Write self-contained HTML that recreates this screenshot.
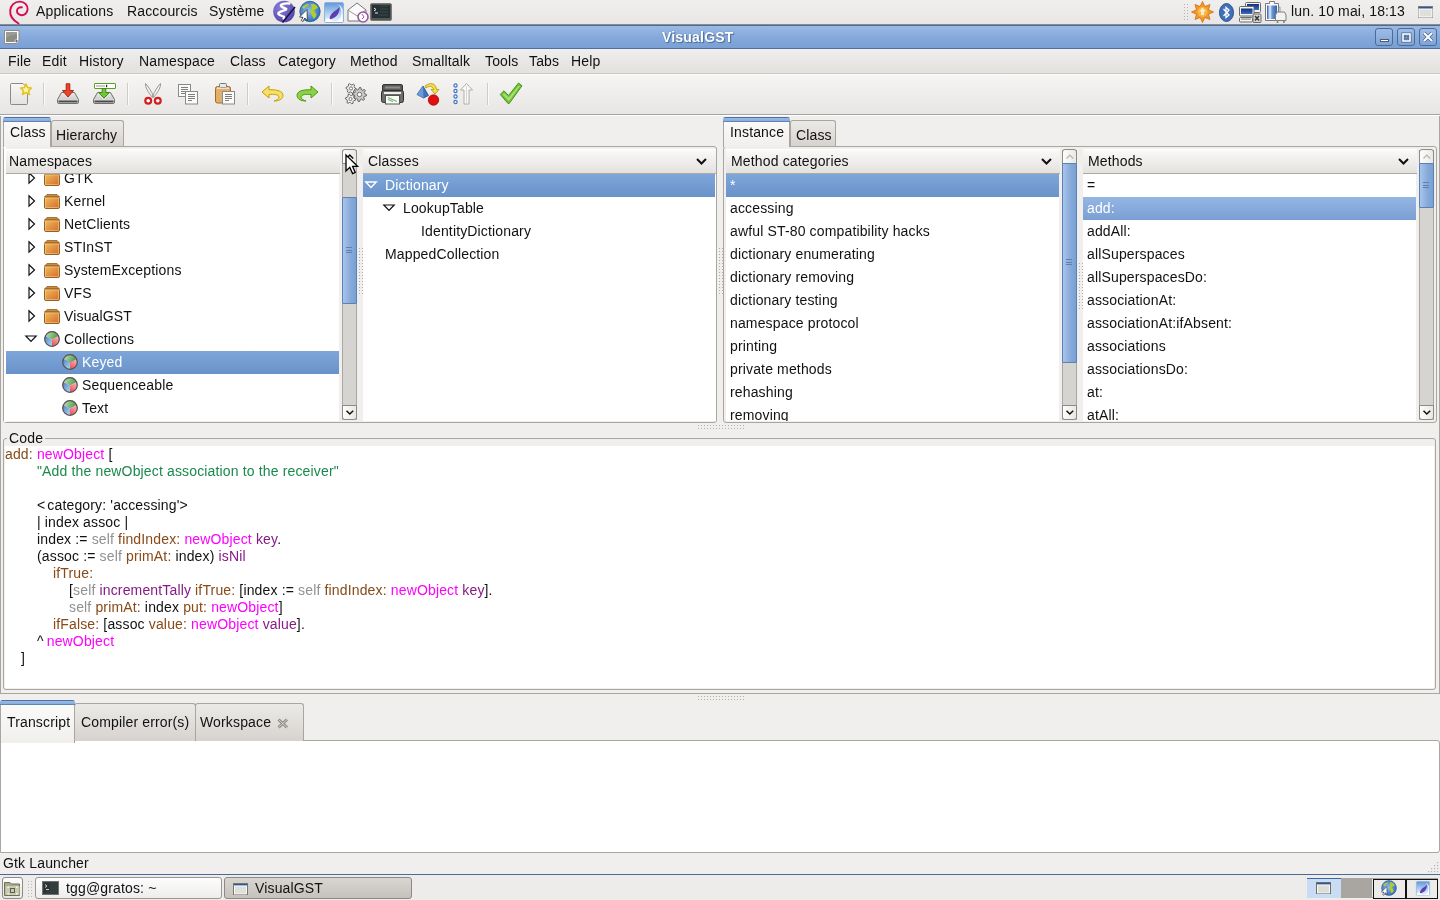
<!DOCTYPE html>
<html><head><meta charset="utf-8">
<style>
*{box-sizing:border-box;margin:0;padding:0}
body{will-change:transform}
html,body{width:1440px;height:900px;overflow:hidden;background:#f0efee;font-family:"Liberation Sans",sans-serif;font-size:14px;line-height:16px;color:#111;letter-spacing:.15px}
.a{position:absolute;white-space:nowrap}
svg{position:absolute;overflow:visible}
.mi{top:53px}
.tsep{position:absolute;top:83px;width:2px;height:22px;border-left:1px solid #cfccc8;border-right:1px solid #fbfbfa}
.hdr{position:absolute;height:25px;background:linear-gradient(#f9f9f8,#e4e2df);border-top:1px solid #fff;border-bottom:1px solid #aeaaa4;line-height:22px;padding-left:3px}
.rows{position:absolute;background:#fff;overflow:hidden}
.row{position:relative;height:23px;line-height:23px;white-space:nowrap}
.sel{background:linear-gradient(#7ea6da,#6893c9);color:#fff}
.sbt{position:absolute;width:15px;background:#d6d4d0;border-left:1px solid #aaa6a0;border-right:1px solid #aaa6a0}
.step{position:absolute;width:15px;height:15px;background:linear-gradient(90deg,#fdfdfd,#e9e8e6);border:1px solid #8e8a84}
.thumb{position:absolute;width:15px;background:linear-gradient(90deg,#a9c5ea,#85a9d9 60%,#7aa1d4);border:1px solid #5a80b5;border-radius:1px}
.tab{position:absolute;height:26px;background:linear-gradient(#eceae7,#d6d3cf);border:1px solid #a9a59f;border-bottom:none;border-radius:3px 3px 0 0;line-height:29px;padding-left:6px}
.tabact{position:absolute;background:linear-gradient(#fbfbfa,#f0efee);border:1px solid #a9a59f;border-bottom:none;border-radius:3px 3px 0 0;line-height:29px;padding-left:6px}
.tabact:before{content:"";position:absolute;left:-1px;right:-1px;top:-1px;height:5px;background:linear-gradient(#4a70a6 0,#4a70a6 1px,#9bbbe6 1px,#87abdc 4px,#5f86bb 4px);border-radius:3px 3px 0 0}
.page{position:absolute;border:1px solid #a9a59f;border-radius:3px;background:#f0efee}
.code span{white-space:pre}
.br{color:#874a18}.mg{color:#f0f}.gr{color:#1a8a4c}.gy{color:#919191}.pu{color:#871a87}
</style></head><body>

<!-- ===== top panel ===== -->
<div class="a" style="left:0;top:0;width:1440px;height:25px;background:linear-gradient(#f0efee,#e8e7e5);border-bottom:1px solid #8f8c87"></div>
<!-- debian swirl -->
<svg style="left:8px;top:0px" width="22" height="25" viewBox="0 0 22 25"><path d="M10.5 23.5 C4.5 20 1.8 15 2.2 10.5 C2.6 5.5 6.5 1.6 11.8 1.6 C16.5 1.6 19.8 5 19.6 9.3 C19.4 13 16.5 15.4 13.3 15.2 C10.5 15 8.8 12.8 9 10.6 C9.2 8.5 11 7 13.8 7.3" fill="none" stroke="#d70a53" stroke-width="1.9" stroke-linecap="round"/></svg>
<div class="a" style="left:36px;top:3px">Applications</div>
<div class="a" style="left:127px;top:3px">Raccourcis</div>
<div class="a" style="left:209px;top:3px">Système</div>
<!-- launcher icons -->
<svg style="left:273px;top:0px" width="23" height="23"><defs><radialGradient id="em" cx=".35" cy=".3" r=".8"><stop offset="0" stop-color="#8a7fd6"/><stop offset="1" stop-color="#4f41a8"/></radialGradient></defs><circle cx="11" cy="11.5" r="10.8" fill="url(#em)"/><path d="M16.5 3.5 C11 3 6 4.5 8.5 6.5 C11 8.5 15.5 8.3 12 10 C8 11.8 3.5 12.5 6 14.5 C8.5 16.5 13 16 10.5 18.5" fill="none" stroke="#fff" stroke-width="2.3" stroke-linecap="round"/><path d="M9.5 22.5 L22 7" stroke="#161640" stroke-width="1.6"/></svg>
<svg style="left:299px;top:1px" width="22" height="21"><defs><radialGradient id="gl" cx=".45" cy=".45" r=".6"><stop offset="0" stop-color="#8ec0ee"/><stop offset="1" stop-color="#2c68b5"/></radialGradient></defs><circle cx="11" cy="10.5" r="10.2" fill="url(#gl)" stroke="#24589e" stroke-width=".8"/><path d="M12 3 C15 2 18 4 19 7 C17 8 16 8 15 9.5 C15.5 11 17 12 17.5 14 C16.5 17 15 18 14 17 C13.5 14.5 12 13 11 11 C12 9 13 8 12.5 6Z" fill="#b2cc2e"/><path d="M3 6 C5 4 8 2.5 10 3 C9 5 7 5.5 5 8 C4 7.5 3.5 7 3 6Z" fill="#b2cc2e"/><path d="M7.3 8.5 L7.5 18.5 L1 15.5 L3.8 14.6 L0 11 Z" fill="none"/><path d="M8 8.5 L8.3 19.5 L5.8 17 L4 20.5 L2.3 19.6 L4 16.3 L0.5 16 Z" fill="#fff" stroke="#333" stroke-width=".8" stroke-linejoin="round"/></svg>
<svg style="left:324px;top:2px" width="20" height="21"><defs><linearGradient id="ft" x1="0" y1="0" x2="0" y2="1"><stop offset="0" stop-color="#5f98da"/><stop offset=".6" stop-color="#bcd6f1"/><stop offset="1" stop-color="#eef5fc"/></linearGradient></defs><rect x=".5" y=".5" width="19" height="20" rx="1.5" fill="url(#ft)" stroke="#8ab3e6"/><path d="M13.5 2 C18 5 18.5 12 16.5 16 C15 18.5 13 19.5 10 20 L18.5 20 L18.5 8 C17.5 5 16 3 13.5 2Z" fill="#fff"/><path d="M15.5 5 C16 11 12.5 16 5.5 17.5 C5.5 14 8 11 10 9.5 C12 8 14 7 15.5 5Z" fill="#5b3fb3"/><path d="M1 20 C1.5 16.5 3.5 15.5 5.5 16.5 C7 18.5 9 19.5 11 20Z" fill="#fff"/></svg>
<svg style="left:347px;top:1px" width="22" height="22"><path d="M1 9 L10 2 L19 9 L19 20 L1 20Z" fill="#fbfbfb" stroke="#777" stroke-width="1"/><path d="M1 9 L10 15 L19 9" fill="none" stroke="#999"/><circle cx="16" cy="16" r="5" fill="#fff" stroke="#9b54a6" stroke-width="1.6"/><path d="M15 13 L17 16 L15 18" fill="none" stroke="#555" stroke-width=".8"/></svg>
<svg style="left:370px;top:3px" width="22" height="18"><rect x=".5" y=".5" width="21" height="17" rx="1.5" fill="#555753" stroke="#7a7a78"/><rect x="2" y="2" width="18" height="13" fill="#243033"/><path d="M4 5 L6 6.5 L4 8 M5 10 L8 10" stroke="#eee" stroke-width="1" fill="none"/><path d="M10 3 L18 3 M10 6 L18 6 M10 9 L18 9 M9 12 L18 12" stroke="#3b4a4d" stroke-width="1.2"/></svg>
<!-- tray -->
<div class="a" style="left:1183px;top:3px;width:5px;height:18px;background-image:radial-gradient(circle,#b8b5b0 0.8px,transparent 1px);background-size:3px 3px"></div>
<svg style="left:1191px;top:1px" width="23" height="22"><path d="M11.5 0.5 L13.8 5.5 L19 3.5 L17.5 8.8 L22.5 11 L17.5 13.3 L19 18.5 L13.8 16.5 L11.5 21.5 L9.2 16.5 L4 18.5 L5.5 13.3 L0.5 11 L5.5 8.8 L4 3.5 L9.2 5.5Z" fill="#f09a26" stroke="#d56a0c" stroke-width=".8"/><circle cx="11.5" cy="11" r="5" fill="#f7b648"/><path d="M11.5 6.5 L15 10.5 L13 10.5 L13 14 L10 14 L10 10.5 L8 10.5Z" fill="#ffe9c4"/></svg>
<svg style="left:1219px;top:3px" width="15" height="19"><ellipse cx="7.5" cy="9.5" rx="7" ry="9" fill="#3f6fb8" stroke="#2c5495"/><path d="M4.5 6 L10 12 L7 14.5 L7 4.5 L10 7 L4.5 13" fill="none" stroke="#fff" stroke-width="1.3"/></svg>
<svg style="left:1239px;top:1px" width="23" height="22"><defs><linearGradient id="scr" x1="0" y1="0" x2="0" y2="1"><stop offset="0" stop-color="#0f2f80"/><stop offset="1" stop-color="#3d6ec0"/></linearGradient></defs><rect x="6.5" y="1.5" width="15" height="10" rx="1" fill="#f4f4f2" stroke="#6a6a68"/><rect x="8" y="3" width="12" height="6" fill="url(#scr)"/><rect x=".5" y="5.5" width="14.5" height="9.5" rx="1" fill="#f4f4f2" stroke="#6a6a68"/><rect x="2" y="7.5" width="11.5" height="5.5" fill="url(#scr)"/><rect x=".5" y="16.5" width="13" height="4.5" rx="1" fill="#f4f4f2" stroke="#6a6a68"/><rect x="2" y="17.5" width="10" height="1.2" fill="#888"/><rect x="14" y="13" width="8" height="8.5" rx="1" fill="#d8d8d6" stroke="#6a6a68"/><path d="M16 15 L20 19.5 M20 15 L16 19.5" stroke="#3a3a3a" stroke-width="1.6"/></svg>
<svg style="left:1265px;top:1px" width="22" height="23"><defs><linearGradient id="bat" x1="0" y1="0" x2="1" y2="0"><stop offset="0" stop-color="#2a5cb0"/><stop offset=".3" stop-color="#e8f0fa"/><stop offset=".5" stop-color="#6e98d4"/><stop offset="1" stop-color="#2f62b5"/></linearGradient></defs><path d="M4.5 .5 L9.5 .5 L9.5 2.5 L13.5 2.5 L13.5 19.5 L.5 19.5 L.5 2.5 L4.5 2.5Z" fill="#fafafa" stroke="#7a7a78"/><rect x="2" y="4.5" width="10" height="13.5" fill="url(#bat)"/><path d="M14 6 L15 6 L15 11" fill="none" stroke="#9a9a98"/><path d="M10.5 14 L12 11 L19.5 11 L21 14 L21 19.5 L10.5 19.5Z" fill="#f2f2f0" stroke="#7e7e7c"/><path d="M12.5 19.5 L12.5 22 M19 19.5 L19 22" stroke="#8a8a88" stroke-width="1.8"/></svg>
<div class="a" style="left:1291px;top:3px">lun. 10 mai, 18:13</div>
<svg style="left:1418px;top:6px" width="15" height="12"><rect x=".5" y=".5" width="14" height="11" fill="#dfe0da" stroke="#7c7c78"/><rect x="1" y="1" width="13" height="2" fill="#2d55a0"/><rect x="1" y="3" width="13" height="8" fill="#dfe0da" stroke="#fff" stroke-width="1"/></svg>

<!-- ===== title bar ===== -->
<div class="a" style="left:0;top:25px;width:1440px;height:24px;background:linear-gradient(#9abae4,#86a9dc 50%,#7aa0d4);border-top:1px solid #4b6d9d;border-bottom:1px solid #4d70a1"></div>
<svg style="left:4px;top:30px" width="16" height="14"><path d="M.5 .5 L15 .5 L15 10 L12 13.5 L.5 13.5Z" fill="#fff" stroke="#8f8b82"/><rect x="2" y="2" width="11" height="10" fill="#8c8c88"/><path d="M2 8 C6 5 9 5 13 4 L13 2 L2 2Z" fill="#9c9c98"/><circle cx="12.5" cy="11" r="1.5" fill="#666" stroke="#eee" stroke-width=".7"/></svg>
<div class="a" style="left:662px;top:29px;color:#fff;font-weight:bold;font-size:14px;letter-spacing:.2px;text-shadow:0 0 1px #4a6b99,1px 1px 1px #4a6b99">VisualGST</div>
<div class="a" style="left:1375px;top:28px;width:18px;height:18px;border:1px solid #4c6c98;border-radius:3px;background:linear-gradient(#9dbde6,#7ea4d6)"><div class="a" style="left:4px;top:10px;width:9px;height:3px;background:#fff;border:1px solid #557"></div></div>
<div class="a" style="left:1397px;top:28px;width:18px;height:18px;border:1px solid #4c6c98;border-radius:3px;background:linear-gradient(#9dbde6,#7ea4d6)"><svg style="left:4px;top:4px" width="9" height="9"><rect x="1" y="1" width="7" height="7" fill="none" stroke="#46628c" stroke-width="3"/><rect x="1" y="1" width="7" height="7" fill="none" stroke="#fff" stroke-width="1.6"/><rect x="3" y="3.5" width="3" height="2" fill="none" stroke="#46628c" stroke-width=".8"/></svg></div>
<div class="a" style="left:1419px;top:28px;width:18px;height:18px;border:1px solid #4c6c98;border-radius:3px;background:linear-gradient(#9dbde6,#7ea4d6)"><svg style="left:3px;top:3px" width="10" height="10"><path d="M1 1 L9 9 M9 1 L1 9" stroke="#41618e" stroke-width="3.2"/><path d="M1 1 L9 9 M9 1 L1 9" stroke="#fff" stroke-width="2"/></svg></div>

<!-- ===== menubar ===== -->
<div class="a" style="left:0;top:49px;width:1440px;height:25px;background:linear-gradient(#efeeec,#e3e1de);border-bottom:1px solid #cbc8c3"></div>
<div class="a mi" style="left:8px">File</div>
<div class="a mi" style="left:42px">Edit</div>
<div class="a mi" style="left:79px">History</div>
<div class="a mi" style="left:139px">Namespace</div>
<div class="a mi" style="left:230px">Class</div>
<div class="a mi" style="left:278px">Category</div>
<div class="a mi" style="left:350px">Method</div>
<div class="a mi" style="left:412px">Smalltalk</div>
<div class="a mi" style="left:485px">Tools</div>
<div class="a mi" style="left:529px">Tabs</div>
<div class="a mi" style="left:571px">Help</div>

<!-- ===== toolbar ===== -->
<div class="a" style="left:0;top:74px;width:1440px;height:41px;background:linear-gradient(#f6f5f4,#e7e6e4);border-top:1px solid #fcfcfc;border-bottom:1px solid #a7a49f"></div>
<div class="a" style="left:0;top:115px;width:1440px;height:1px;background:#fff"></div>
<!-- new -->
<svg style="left:10px;top:83px" width="22" height="22"><path d="M.5 1.5 Q.5 .5 1.5 .5 L13 .5 L17.5 5 L17.5 20.5 Q17.5 21.5 16.5 21.5 L1.5 21.5 Q.5 21.5 .5 20.5Z" fill="url(#gpaper)" stroke="#8a8a86"/><path d="M16 1 L17.6 4.6 L21.5 5 L18.6 7.6 L19.5 11.5 L16 9.5 L12.5 11.5 L13.4 7.6 L10.5 5 L14.4 4.6Z" fill="#fff6a8" stroke="#e2c524" stroke-width="1.6" stroke-linejoin="round"/></svg>
<div class="tsep" style="left:43px"></div>
<!-- save -->
<svg style="left:57px;top:83px" width="23" height="21"><defs><linearGradient id="gpaper" x1="0" y1="0" x2="0" y2="1"><stop offset="0" stop-color="#f7f7f6"/><stop offset="1" stop-color="#e2e2e0"/></linearGradient><linearGradient id="gdrive" x1="0" y1="0" x2="0" y2="1"><stop offset="0" stop-color="#e9e9e8"/><stop offset=".6" stop-color="#d2d2d0"/><stop offset="1" stop-color="#f2f2f2"/></linearGradient></defs><path d="M4.5 9.5 L17.5 9.5 L21.5 16.5 L21.5 19 Q21.5 20.5 20 20.5 L2 20.5 Q.5 20.5 .5 19 L.5 16.5Z" fill="url(#gdrive)" stroke="#6f6f6d"/><rect x="1.5" y="17.5" width="19" height="2" fill="#4a4a48"/><path d="M9.2 .8 L12.8 .8 L12.8 7.5 L16.5 7.5 L11 14 L5.5 7.5 L9.2 7.5Z" fill="#e8452a" stroke="#b02410" stroke-linejoin="round"/></svg>
<!-- save as -->
<svg style="left:93px;top:83px" width="23" height="21"><path d="M4.5 9.5 L17.5 9.5 L21.5 16.5 L21.5 19 Q21.5 20.5 20 20.5 L2 20.5 Q.5 20.5 .5 19 L.5 16.5Z" fill="url(#gdrive)" stroke="#6f6f6d"/><rect x="1.5" y="17.5" width="19" height="2" fill="#4a4a48"/><rect x="1.5" y=".5" width="21" height="5" rx=".5" fill="#fff" stroke="#5aa01a"/><rect x="3" y="2.3" width="9" height="1.4" fill="#b5b5b5"/><rect x="13" y="1.8" width="1.2" height="2.4" fill="#222"/><path d="M9.2 5.5 L12.8 5.5 L12.8 9.5 L16.5 9.5 L11 15 L5.5 9.5 L9.2 9.5Z" fill="#73c63c" stroke="#3d8a14" stroke-linejoin="round"/></svg>
<div class="tsep" style="left:127px"></div>
<!-- cut -->
<svg style="left:144px;top:83px" width="18" height="22"><path d="M1.5 .5 C1 4 4 9 8.5 14.5 L9.5 13 C7 8 4.5 3.5 1.5 .5Z M16.5 .5 C17 4 14 9 9.5 14.5 L8.5 13 C11 8 13.5 3.5 16.5 .5Z" fill="#f2f2f2" stroke="#8c8c8a" stroke-width=".9"/><circle cx="4.2" cy="17.8" r="2.9" fill="#fff" stroke="#d21f1f" stroke-width="2.2"/><circle cx="13.8" cy="17.8" r="2.9" fill="#fff" stroke="#d21f1f" stroke-width="2.2"/></svg>
<!-- copy -->
<svg style="left:178px;top:84px" width="21" height="21"><rect x=".5" y=".5" width="12" height="12" fill="#fafafa" stroke="#8a8a88"/><path d="M3 3.5 H10 M3 5.5 H10 M3 7.5 H10 M3 9.5 H7" stroke="#7d7d7b" stroke-width="1"/><rect x="7.5" y="7.5" width="12" height="12.5" fill="#fafafa" stroke="#8a8a88"/><path d="M10 10.5 H17 M10 12.5 H17 M10 14.5 H17 M10 16.5 H14" stroke="#7d7d7b" stroke-width="1"/></svg>
<!-- paste -->
<svg style="left:215px;top:83px" width="21" height="22"><rect x=".5" y="3.5" width="15" height="16.5" rx="2" fill="#e0b06a" stroke="#a0692a"/><rect x="4.5" y=".5" width="7" height="4" rx="1" fill="#e9e9e8" stroke="#777"/><rect x="2" y="4.5" width="12" height="1.5" fill="#fff" opacity=".6"/><rect x="7.5" y="8.5" width="12" height="12.5" fill="#fafafa" stroke="#8a8a88"/><path d="M10 11.5 H17 M10 13.5 H17 M10 15.5 H17 M10 17.5 H14" stroke="#7d7d7b" stroke-width="1"/></svg>
<div class="tsep" style="left:247px"></div>
<!-- undo -->
<svg style="left:261px;top:85px" width="23" height="17"><path d="M8 1 L1 7 L8 13 L8 9.5 C13 9 18 9.5 18 12 C18 14 15 15.5 13 16 C19 16 22 13.5 22 10.5 C22 6 16 4.5 8 4.8Z" fill="#f6e06a" stroke="#c4a000" stroke-linejoin="round"/></svg>
<!-- redo -->
<svg style="left:296px;top:85px" width="23" height="17"><path d="M15 1 L22 7 L15 13 L15 9.5 C10 9 5 9.5 5 12 C5 14 8 15.5 10 16 C4 16 1 13.5 1 10.5 C1 6 7 4.5 15 4.8Z" fill="#8bd24a" stroke="#4e9a06" stroke-linejoin="round"/></svg>
<div class="tsep" style="left:331px"></div>
<!-- gears -->
<svg style="left:345px;top:83px" width="22" height="21"><polygon points="11.00,5.50 10.83,6.79 9.12,7.30 8.55,8.05 8.50,9.83 7.29,10.33 6.00,9.10 5.07,8.98 3.50,9.83 2.46,9.04 2.88,7.30 2.52,6.43 1.00,5.50 1.17,4.21 2.88,3.70 3.45,2.95 3.50,1.17 4.71,0.67 6.00,1.90 6.93,2.02 8.50,1.17 9.54,1.96 9.12,3.70 9.48,4.57" fill="#f2f2f1" stroke="#555" stroke-width=".9" stroke-linejoin="round"/><circle cx="6" cy="5.5" r="1.6" fill="#fdfdfd" stroke="#555" stroke-width=".8"/><polygon points="21.50,11.50 21.37,12.87 19.16,13.43 18.69,14.30 19.45,16.45 18.39,17.32 16.43,16.16 15.48,16.44 14.50,18.50 13.13,18.37 12.57,16.16 11.70,15.69 9.55,16.45 8.68,15.39 9.84,13.43 9.56,12.48 7.50,11.50 7.63,10.13 9.84,9.57 10.31,8.70 9.55,6.55 10.61,5.68 12.57,6.84 13.52,6.56 14.50,4.50 15.87,4.63 16.43,6.84 17.30,7.31 19.45,6.55 20.32,7.61 19.16,9.57 19.44,10.52" fill="#c9c9c7" stroke="#555" stroke-width=".9" stroke-linejoin="round"/><circle cx="14.5" cy="11.5" r="2.2" fill="#fdfdfd" stroke="#555" stroke-width=".8"/><polygon points="10.50,16.00 10.33,17.29 8.62,17.80 8.05,18.55 8.00,20.33 6.79,20.83 5.50,19.60 4.57,19.48 3.00,20.33 1.96,19.54 2.38,17.80 2.02,16.93 0.50,16.00 0.67,14.71 2.38,14.20 2.95,13.45 3.00,11.67 4.21,11.17 5.50,12.40 6.43,12.52 8.00,11.67 9.04,12.46 8.62,14.20 8.98,15.07" fill="#f2f2f1" stroke="#555" stroke-width=".9" stroke-linejoin="round"/><circle cx="5.5" cy="16" r="1.6" fill="#fdfdfd" stroke="#555" stroke-width=".8"/></svg>
<!-- print -->
<svg style="left:381px;top:84px" width="23" height="21"><rect x="1.5" y=".5" width="20" height="7" rx="1.5" fill="#5a5a58" stroke="#333"/><rect x="4" y="2.5" width="15" height="2" fill="#8d8d8b"/><rect x=".5" y="6.5" width="22" height="12" rx="2" fill="#6d6d6b" stroke="#2e2e2c"/><rect x="3" y="8" width="17" height="2" fill="#eee"/><rect x="4.5" y="11.5" width="14" height="8.5" fill="#fbfbfb" stroke="#555"/><path d="M7 13.5 L16 17.5 M7 15.5 L12 17.5" stroke="#6fb86a" stroke-width="1.1"/></svg>
<!-- shapes -->
<svg style="left:416px;top:82px" width="24" height="24"><path d="M7 4 L12.5 13.5 L7.5 16 L1 12.5Z" fill="#3f73bd" stroke="#24508f" stroke-width=".8" stroke-linejoin="round"/><path d="M7 4 L7.5 16 L1 12.5Z" fill="#6c9ad6"/><circle cx="17.5" cy="18" r="5.2" fill="#e01010" stroke="#a00" stroke-width=".8"/><path d="M9 4 C14 0 20 1 20.5 7.5 L23 7.5 L19 12 L15 7.5 L17.5 7.5 C17 4 13 3.5 10 6Z" fill="#f5dc4a" stroke="#b39400" stroke-width=".8" stroke-linejoin="round"/></svg>
<!-- up -->
<svg style="left:453px;top:83px" width="21" height="22"><g fill="#fff" stroke="#3d72c4" stroke-width="1.2"><circle cx="2.5" cy="2.5" r="1.6"/><circle cx="2.5" cy="8" r="1.6"/><circle cx="2.5" cy="13.5" r="1.6"/><circle cx="2.5" cy="19" r="1.6"/></g><path d="M13.5 .5 L19.5 7 L16 7 L16 21 L11 21 L11 7 L7.5 7Z" fill="#fafafa" stroke="#a5a5a3" stroke-width=".9" stroke-linejoin="round"/><path d="M13.5 3 L13.5 21" stroke="#d5d5d3" stroke-width="1"/></svg>
<div class="tsep" style="left:487px"></div>
<!-- check -->
<svg style="left:499px;top:82px" width="24" height="23"><path d="M1.2 12.5 L5 8.8 L9.5 13.5 L19.5 1 L23 3.8 L10.2 21.5 L9 21.5Z" fill="#6dbd3a" stroke="#4a9a17" stroke-linejoin="round"/><path d="M3.5 12.5 L5 11 L9.7 15.6 L19.8 3.2 L21 4.2 L10 19.2Z" fill="#a6e06c"/></svg>


<!-- ===== left notebook ===== -->
<div class="a" style="left:0;top:116px;width:1px;height:578px;background:#a9a6a1"></div>
<div class="a" style="left:1439px;top:116px;width:1px;height:578px;background:#a9a6a1"></div>
<div class="a" style="left:0;top:693px;width:1440px;height:1px;background:#a9a6a1"></div>
<div class="page" style="left:3px;top:146px;width:714px;height:277px"></div>
<div class="tab" style="left:51px;top:120px;width:73px;padding-left:4px">Hierarchy</div>
<div class="tabact" style="left:3px;top:117px;width:48px;height:30px">Class</div>

<!-- namespaces -->
<div class="a" style="left:4px;top:147px;width:2px;height:275px;background:#fff"></div>
<div class="hdr" style="left:6px;top:149px;width:334px;padding-left:3px">Namespaces</div>
<div class="rows" style="left:6px;top:174px;width:333px;height:247px">
  <div class="row" style="margin-top:-7px">__NS__GTK</div>
</div>
<div class="a" style="left:6px;top:174px;width:333px;height:247px;overflow:hidden;background:#fff">
<svg style="left:22px;top:-2px" width="8" height="12"><path d="M1 .8 L6.5 6 L1 11.2Z" fill="#fff" stroke="#111" stroke-width="1.2" stroke-linejoin="miter"/></svg>
<svg style="left:38px;top:-3px" width="16" height="15"><defs><linearGradient id="gf-3" x1="0" y1="0" x2="1" y2="1"><stop offset="0" stop-color="#f0be5c"/><stop offset="1" stop-color="#d46a2c"/></linearGradient></defs><path d="M3 .5 L13 .5 L15.5 3 L.5 3Z" fill="#c68a45" stroke="#9a5f1e" stroke-width=".8"/><rect x=".5" y="3" width="15" height="11.5" rx="1.5" fill="url(#gf-3)" stroke="#98601c"/><rect x="1.5" y="4" width="13" height="9.5" fill="none" stroke="#f8d9a8" stroke-width=".7" opacity=".7"/></svg>
<div class="a" style="left:58px;top:-4px">GTK</div>
<svg style="left:22px;top:21px" width="8" height="12"><path d="M1 .8 L6.5 6 L1 11.2Z" fill="#fff" stroke="#111" stroke-width="1.2" stroke-linejoin="miter"/></svg>
<svg style="left:38px;top:20px" width="16" height="15"><defs><linearGradient id="gf20" x1="0" y1="0" x2="1" y2="1"><stop offset="0" stop-color="#f0be5c"/><stop offset="1" stop-color="#d46a2c"/></linearGradient></defs><path d="M3 .5 L13 .5 L15.5 3 L.5 3Z" fill="#c68a45" stroke="#9a5f1e" stroke-width=".8"/><rect x=".5" y="3" width="15" height="11.5" rx="1.5" fill="url(#gf20)" stroke="#98601c"/><rect x="1.5" y="4" width="13" height="9.5" fill="none" stroke="#f8d9a8" stroke-width=".7" opacity=".7"/></svg>
<div class="a" style="left:58px;top:19px">Kernel</div>
<svg style="left:22px;top:44px" width="8" height="12"><path d="M1 .8 L6.5 6 L1 11.2Z" fill="#fff" stroke="#111" stroke-width="1.2" stroke-linejoin="miter"/></svg>
<svg style="left:38px;top:43px" width="16" height="15"><defs><linearGradient id="gf43" x1="0" y1="0" x2="1" y2="1"><stop offset="0" stop-color="#f0be5c"/><stop offset="1" stop-color="#d46a2c"/></linearGradient></defs><path d="M3 .5 L13 .5 L15.5 3 L.5 3Z" fill="#c68a45" stroke="#9a5f1e" stroke-width=".8"/><rect x=".5" y="3" width="15" height="11.5" rx="1.5" fill="url(#gf43)" stroke="#98601c"/><rect x="1.5" y="4" width="13" height="9.5" fill="none" stroke="#f8d9a8" stroke-width=".7" opacity=".7"/></svg>
<div class="a" style="left:58px;top:42px">NetClients</div>
<svg style="left:22px;top:67px" width="8" height="12"><path d="M1 .8 L6.5 6 L1 11.2Z" fill="#fff" stroke="#111" stroke-width="1.2" stroke-linejoin="miter"/></svg>
<svg style="left:38px;top:66px" width="16" height="15"><defs><linearGradient id="gf66" x1="0" y1="0" x2="1" y2="1"><stop offset="0" stop-color="#f0be5c"/><stop offset="1" stop-color="#d46a2c"/></linearGradient></defs><path d="M3 .5 L13 .5 L15.5 3 L.5 3Z" fill="#c68a45" stroke="#9a5f1e" stroke-width=".8"/><rect x=".5" y="3" width="15" height="11.5" rx="1.5" fill="url(#gf66)" stroke="#98601c"/><rect x="1.5" y="4" width="13" height="9.5" fill="none" stroke="#f8d9a8" stroke-width=".7" opacity=".7"/></svg>
<div class="a" style="left:58px;top:65px">STInST</div>
<svg style="left:22px;top:90px" width="8" height="12"><path d="M1 .8 L6.5 6 L1 11.2Z" fill="#fff" stroke="#111" stroke-width="1.2" stroke-linejoin="miter"/></svg>
<svg style="left:38px;top:89px" width="16" height="15"><defs><linearGradient id="gf89" x1="0" y1="0" x2="1" y2="1"><stop offset="0" stop-color="#f0be5c"/><stop offset="1" stop-color="#d46a2c"/></linearGradient></defs><path d="M3 .5 L13 .5 L15.5 3 L.5 3Z" fill="#c68a45" stroke="#9a5f1e" stroke-width=".8"/><rect x=".5" y="3" width="15" height="11.5" rx="1.5" fill="url(#gf89)" stroke="#98601c"/><rect x="1.5" y="4" width="13" height="9.5" fill="none" stroke="#f8d9a8" stroke-width=".7" opacity=".7"/></svg>
<div class="a" style="left:58px;top:88px">SystemExceptions</div>
<svg style="left:22px;top:113px" width="8" height="12"><path d="M1 .8 L6.5 6 L1 11.2Z" fill="#fff" stroke="#111" stroke-width="1.2" stroke-linejoin="miter"/></svg>
<svg style="left:38px;top:112px" width="16" height="15"><defs><linearGradient id="gf112" x1="0" y1="0" x2="1" y2="1"><stop offset="0" stop-color="#f0be5c"/><stop offset="1" stop-color="#d46a2c"/></linearGradient></defs><path d="M3 .5 L13 .5 L15.5 3 L.5 3Z" fill="#c68a45" stroke="#9a5f1e" stroke-width=".8"/><rect x=".5" y="3" width="15" height="11.5" rx="1.5" fill="url(#gf112)" stroke="#98601c"/><rect x="1.5" y="4" width="13" height="9.5" fill="none" stroke="#f8d9a8" stroke-width=".7" opacity=".7"/></svg>
<div class="a" style="left:58px;top:111px">VFS</div>
<svg style="left:22px;top:136px" width="8" height="12"><path d="M1 .8 L6.5 6 L1 11.2Z" fill="#fff" stroke="#111" stroke-width="1.2" stroke-linejoin="miter"/></svg>
<svg style="left:38px;top:135px" width="16" height="15"><defs><linearGradient id="gf135" x1="0" y1="0" x2="1" y2="1"><stop offset="0" stop-color="#f0be5c"/><stop offset="1" stop-color="#d46a2c"/></linearGradient></defs><path d="M3 .5 L13 .5 L15.5 3 L.5 3Z" fill="#c68a45" stroke="#9a5f1e" stroke-width=".8"/><rect x=".5" y="3" width="15" height="11.5" rx="1.5" fill="url(#gf135)" stroke="#98601c"/><rect x="1.5" y="4" width="13" height="9.5" fill="none" stroke="#f8d9a8" stroke-width=".7" opacity=".7"/></svg>
<div class="a" style="left:58px;top:134px">VisualGST</div>
<svg style="left:19px;top:161px" width="12" height="8"><path d="M.8 1 L11.2 1 L6 6.5Z" fill="#fff" stroke="#111" stroke-width="1.2"/></svg>
<svg style="left:38px;top:157px" width="16" height="16"><defs><linearGradient id="cg" x1="0" y1="0" x2="1" y2=".3"><stop offset="0" stop-color="#cfe5bd"/><stop offset="1" stop-color="#4f9e4f"/></linearGradient><linearGradient id="cb" x1="0" y1="0" x2="1" y2="1"><stop offset="0" stop-color="#4f80c4"/><stop offset="1" stop-color="#b3d4ee"/></linearGradient><linearGradient id="cr" x1=".5" y1="0" x2="0" y2="1"><stop offset="0" stop-color="#f8aab2"/><stop offset="1" stop-color="#e64a4a"/></linearGradient></defs><path d="M8 8.5 L1.2 5 A7.2 7.2 0 0 1 14.8 5Z" fill="url(#cg)"/><path d="M8 8.5 L8 15.3 A7.2 7.2 0 0 1 1.2 5Z" fill="url(#cb)"/><path d="M8 8.5 L14.8 5 A7.2 7.2 0 0 1 8 15.3Z" fill="url(#cr)"/><circle cx="8" cy="8" r="7.3" fill="none" stroke="#525252" stroke-width="1.2"/></svg>
<div class="a" style="left:58px;top:157px">Collections</div>
<div class="a sel" style="left:0;top:177px;width:333px;height:23px"></div>
<svg style="left:56px;top:180px" width="16" height="16"><path d="M8 8.5 L1.2 5 A7.2 7.2 0 0 1 14.8 5Z" fill="url(#cg)"/><path d="M8 8.5 L8 15.3 A7.2 7.2 0 0 1 1.2 5Z" fill="url(#cb)"/><path d="M8 8.5 L14.8 5 A7.2 7.2 0 0 1 8 15.3Z" fill="url(#cr)"/><circle cx="8" cy="8" r="7.3" fill="none" stroke="#525252" stroke-width="1.2"/></svg>
<div class="a" style="left:76px;top:180px;color:#fff">Keyed</div>
<svg style="left:56px;top:203px" width="16" height="16"><path d="M8 8.5 L1.2 5 A7.2 7.2 0 0 1 14.8 5Z" fill="url(#cg)"/><path d="M8 8.5 L8 15.3 A7.2 7.2 0 0 1 1.2 5Z" fill="url(#cb)"/><path d="M8 8.5 L14.8 5 A7.2 7.2 0 0 1 8 15.3Z" fill="url(#cr)"/><circle cx="8" cy="8" r="7.3" fill="none" stroke="#525252" stroke-width="1.2"/></svg>
<div class="a" style="left:76px;top:203px">Sequenceable</div>
<svg style="left:56px;top:226px" width="16" height="16"><path d="M8 8.5 L1.2 5 A7.2 7.2 0 0 1 14.8 5Z" fill="url(#cg)"/><path d="M8 8.5 L8 15.3 A7.2 7.2 0 0 1 1.2 5Z" fill="url(#cb)"/><path d="M8 8.5 L14.8 5 A7.2 7.2 0 0 1 8 15.3Z" fill="url(#cr)"/><circle cx="8" cy="8" r="7.3" fill="none" stroke="#525252" stroke-width="1.2"/></svg>
<div class="a" style="left:76px;top:226px">Text</div>
</div>
<div class="sbt" style="left:342px;top:150px;height:270px"></div>
<div class="step" style="left:342px;top:149px;border-radius:3px 3px 0 0"></div>
<div class="thumb" style="left:342px;top:197px;height:107px"></div>
<div class="step" style="left:342px;top:405px;border-radius:0 0 3px 3px"></div>

<!-- classes -->
<div class="hdr" style="left:363px;top:149px;width:353px;padding-left:5px">Classes</div>
<div class="a" style="left:363px;top:174px;width:353px;height:247px;overflow:hidden;background:#fff">
<div class="a sel" style="left:0;top:0;width:352px;height:23px"></div>
<svg style="left:2px;top:7px" width="12" height="8"><path d="M.8 1 L11.2 1 L6 6.5Z" fill="none" stroke="#fff" stroke-width="1.4"/></svg>
<div class="a" style="left:22px;top:3px;color:#fff">Dictionary</div>
<svg style="left:20px;top:30px" width="12" height="8"><path d="M.8 1 L11.2 1 L6 6.5Z" fill="#fff" stroke="#111" stroke-width="1.2"/></svg>
<div class="a" style="left:40px;top:26px">LookupTable</div>
<div class="a" style="left:58px;top:49px">IdentityDictionary</div>
<div class="a" style="left:22px;top:72px">MappedCollection</div>
</div>

<!-- ===== right notebook ===== -->
<div class="page" style="left:723px;top:146px;width:714px;height:277px"></div>
<div class="tab" style="left:790px;top:120px;width:46px;padding-left:5px">Class</div>
<div class="tabact" style="left:723px;top:117px;width:67px;height:30px">Instance</div>

<div class="hdr" style="left:726px;top:149px;width:334px;padding-left:5px">Method categories</div>
<div class="a" style="left:726px;top:174px;width:333px;height:247px;overflow:hidden;background:#fff">
<div class="a sel" style="left:0;top:0;width:333px;height:23px"></div>
<div class="a" style="left:4px;top:3px;color:#fff">*</div>
<div class="a" style="left:4px;top:26px">accessing</div>
<div class="a" style="left:4px;top:49px">awful ST-80 compatibility hacks</div>
<div class="a" style="left:4px;top:72px">dictionary enumerating</div>
<div class="a" style="left:4px;top:95px">dictionary removing</div>
<div class="a" style="left:4px;top:118px">dictionary testing</div>
<div class="a" style="left:4px;top:141px">namespace protocol</div>
<div class="a" style="left:4px;top:164px">printing</div>
<div class="a" style="left:4px;top:187px">private methods</div>
<div class="a" style="left:4px;top:210px">rehashing</div>
<div class="a" style="left:4px;top:233px">removing</div>
</div>
<div class="sbt" style="left:1062px;top:150px;height:270px"></div>
<div class="step" style="left:1062px;top:149px;border-radius:3px 3px 0 0"></div>
<div class="thumb" style="left:1062px;top:163px;height:200px"></div>
<div class="step" style="left:1062px;top:405px;border-radius:0 0 3px 3px"></div>

<div class="hdr" style="left:1083px;top:149px;width:334px;padding-left:5px">Methods</div>
<div class="a" style="left:1083px;top:174px;width:333px;height:247px;overflow:hidden;background:#fff">
<div class="a" style="left:0;top:23px;width:333px;height:23px;background:linear-gradient(#94b6e3,#7a9fd3)"></div>
<div class="a" style="left:4px;top:3px">=</div>
<div class="a" style="left:4px;top:26px;color:#fff">add:</div>
<div class="a" style="left:4px;top:49px">addAll:</div>
<div class="a" style="left:4px;top:72px">allSuperspaces</div>
<div class="a" style="left:4px;top:95px">allSuperspacesDo:</div>
<div class="a" style="left:4px;top:118px">associationAt:</div>
<div class="a" style="left:4px;top:141px">associationAt:ifAbsent:</div>
<div class="a" style="left:4px;top:164px">associations</div>
<div class="a" style="left:4px;top:187px">associationsDo:</div>
<div class="a" style="left:4px;top:210px">at:</div>
<div class="a" style="left:4px;top:233px">atAll:</div>
</div>
<div class="sbt" style="left:1419px;top:150px;height:270px"></div>
<div class="step" style="left:1419px;top:149px;border-radius:3px 3px 0 0"></div>
<div class="thumb" style="left:1419px;top:163px;height:45px"></div>
<div class="step" style="left:1419px;top:405px;border-radius:0 0 3px 3px"></div>

<!-- ===== code ===== -->
<div class="a" style="left:3px;top:438px;width:1433px;height:252px;border:1px solid #a9a59f;border-radius:3px"></div>
<div class="a" style="left:5px;top:446px;width:1429px;height:242px;background:#fff"></div>
<div class="a" style="left:7px;top:430px;padding:0 2px;background:#f0efee">Code</div>
<div class="a code" style="left:5px;top:446px;line-height:17px;letter-spacing:.15px"><span class="br">add:</span> <span class="mg">newObject</span> [</div>
<div class="a code" style="left:37px;top:463px;line-height:17px;letter-spacing:.15px"><span class="gr">"Add the newObject association to the receiver"</span></div>
<div class="a code" style="left:37px;top:497px;line-height:17px;letter-spacing:.15px"><span style="margin-right:2px">&lt;</span>category: 'accessing'&gt;</div>
<div class="a code" style="left:37px;top:514px;line-height:17px;letter-spacing:.15px">| index assoc |</div>
<div class="a code" style="left:37px;top:531px;line-height:17px;letter-spacing:.15px">index := <span class="gy">self</span> <span class="br">findIndex:</span> <span class="mg">newObject</span> <span class="pu">key</span>.</div>
<div class="a code" style="left:37px;top:548px;line-height:17px;letter-spacing:.15px">(assoc := <span class="gy">self</span> <span class="br">primAt:</span> index) <span class="pu">isNil</span></div>
<div class="a code" style="left:53px;top:565px;line-height:17px;letter-spacing:.15px"><span class="br">ifTrue:</span></div>
<div class="a code" style="left:69px;top:582px;line-height:17px;letter-spacing:.15px">[<span class="gy">self</span> <span class="pu">incrementTally</span> <span class="br">ifTrue:</span> [index := <span class="gy">self</span> <span class="br">findIndex:</span> <span class="mg">newObject</span> <span class="pu">key</span>].</div>
<div class="a code" style="left:69px;top:599px;line-height:17px;letter-spacing:.15px"><span class="gy">self</span> <span class="br">primAt:</span> index <span class="br">put:</span> <span class="mg">newObject</span>]</div>
<div class="a code" style="left:53px;top:616px;line-height:17px;letter-spacing:.15px"><span class="br">ifFalse:</span> [assoc <span class="br">value:</span> <span class="mg">newObject</span> <span class="pu">value</span>].</div>
<div class="a code" style="left:37px;top:633px;line-height:17px;letter-spacing:.15px"><span style="margin-right:3px">^</span><span class="mg">newObject</span></div>
<div class="a code" style="left:21px;top:650px;line-height:17px;letter-spacing:.15px">]</div>

<!-- ===== bottom notebook ===== -->
<div class="page" style="left:0;top:740px;width:1440px;height:113px;background:#fff;border-radius:0 3px 3px 0"></div>
<div class="tab" style="left:74px;top:703px;width:122px;height:38px;line-height:37px">Compiler error(s)</div>
<div class="tab" style="left:195px;top:703px;width:109px;height:38px;line-height:37px;padding-left:4px">Workspace</div>
<div class="tabact" style="left:0;top:700px;width:75px;height:43px;line-height:42px;padding-left:6px">Transcript</div>

<!-- status bar -->
<div class="a" style="left:3px;top:855px">Gtk Launcher</div>
<div class="a" style="left:0;top:874px;width:1440px;height:1px;background:#4b6a96"></div>
<div class="a" style="left:0;top:875px;width:1440px;height:25px;background:#edeceb"></div>
<!-- ===== taskbar ===== -->
<div class="a" style="left:2px;top:877px;width:21px;height:22px;border:1px solid #8e8b86;border-radius:3px;background:linear-gradient(#fdfdfd,#e8e7e5)"></div>
<svg style="left:4px;top:881px" width="17" height="15"><path d="M.5 1.5 L6 1.5 L7.5 3 L15.5 3 L15.5 14.5 L.5 14.5Z" fill="#a9ab90" stroke="#6e7058"/><rect x="1.5" y="5" width="14" height="9" fill="#c9cbb0"/><path d="M4 7 L4 6 L5 6 M12 6 L13 6 L13 7 M4 12 L4 13 L5 13 M12 13 L13 13 L13 12" stroke="#fff" fill="none"/><rect x="6.5" y="7.5" width="4" height="4" fill="none" stroke="#5c5e48"/></svg>
<div class="a" style="left:27px;top:880px;width:5px;height:17px;background-image:radial-gradient(circle,#bdbab5 0.8px,transparent 1px);background-size:3px 3px"></div>
<div class="a" style="left:35px;top:877px;width:187px;height:22px;border:1px solid #9a968f;border-radius:3px;background:linear-gradient(#fdfdfd,#eeedec)"></div>
<svg style="left:42px;top:881px" width="17" height="14"><rect x=".5" y=".5" width="16" height="13" fill="#3c4446" stroke="#6d7270"/><rect x="1.5" y="1.5" width="14" height="11" fill="#2a3234"/><path d="M3 3.5 L5 5 L3 6.5 M4 8.5 L7 8.5" stroke="#ddd" stroke-width=".9" fill="none"/><path d="M8 3 H15 M8 5 H15 M8 7 H15 M8 9 H15 M4 11 H15" stroke="#3e4a4c" stroke-width="1"/></svg>
<div class="a" style="left:66px;top:880px">tgg@gratos: ~</div>
<div class="a" style="left:224px;top:877px;width:188px;height:22px;border:1px solid #8d8a85;border-radius:3px;background:linear-gradient(#d9d6d2,#c5c2bd)"></div>
<svg style="left:233px;top:883px" width="15" height="12"><rect x=".5" y=".5" width="14" height="11" fill="#e0e1db" stroke="#76766f"/><rect x="1" y="1" width="13" height="1.6" fill="#2d55a0"/><rect x="1.5" y="3" width="12" height="8" fill="#dfe0da" stroke="#fff" stroke-width=".8"/></svg>
<div class="a" style="left:255px;top:880px">VisualGST</div>

<div class="a" style="left:1307px;top:878px;width:131px;height:20px;border:1px solid #a9a59f;background:#e9e8e6"></div>
<div class="a" style="left:1307px;top:878px;width:34px;height:20px;background:#c8dcf4;border-top:1px solid #3c67ad"></div>
<svg style="left:1316px;top:882px" width="15" height="12"><rect x=".5" y=".5" width="14" height="11" fill="#dcddd8" stroke="#6e6e68"/><rect x="1" y="1" width="13" height="1.6" fill="#2d55a0"/><rect x="1.5" y="3" width="12" height="8" fill="#dcddd8" stroke="#fff" stroke-width=".8"/></svg>
<div class="a" style="left:1341px;top:878px;width:31px;height:20px;background:#a9a5a1"></div>
<div class="a" style="left:1373px;top:879px;width:33px;height:20px;border:1.5px solid #111;background:#ecebea"></div>
<div class="a" style="left:1406px;top:879px;width:32px;height:20px;border:1.5px solid #111;background:#ecebea"></div>
<svg style="left:1381px;top:880px" width="16" height="16" viewBox="0 0 22 21"><circle cx="11" cy="10.5" r="10.2" fill="url(#gl)" stroke="#24589e" stroke-width=".8"/><path d="M12 3 C15 2 18 4 19 7 C17 8 16 8 15 9.5 C15.5 11 17 12 17.5 14 C16.5 17 15 18 14 17 C13.5 14.5 12 13 11 11 C12 9 13 8 12.5 6Z" fill="#b2cc2e"/><path d="M3 6 C5 4 8 2.5 10 3 C9 5 7 5.5 5 8 C4 7.5 3.5 7 3 6Z" fill="#b2cc2e"/><path d="M8 8.5 L8.3 19.5 L5.8 17 L4 20.5 L2.3 19.6 L4 16.3 L0.5 16 Z" fill="#fff" stroke="#333" stroke-width=".8" stroke-linejoin="round"/></svg>
<svg style="left:1416px;top:881px" width="14" height="15" viewBox="0 0 20 21"><rect x=".5" y=".5" width="19" height="20" rx="1.5" fill="url(#ft)" stroke="#8ab3e6"/><path d="M13.5 2 C18 5 18.5 12 16.5 16 C15 18.5 13 19.5 10 20 L18.5 20 L18.5 8 C17.5 5 16 3 13.5 2Z" fill="#fff"/><path d="M15.5 5 C16 11 12.5 16 5.5 17.5 C5.5 14 8 11 10 9.5 C12 8 14 7 15.5 5Z" fill="#5b3fb3"/><path d="M1 20 C1.5 16.5 3.5 15.5 5.5 16.5 C7 18.5 9 19.5 11 20Z" fill="#fff"/></svg>
<!-- resize grip -->
<svg style="left:1428px;top:862px" width="12" height="12"><rect x="9" y="0" width="1.2" height="1.2" fill="#b5b2ad"/><rect x="6" y="3" width="1.2" height="1.2" fill="#b5b2ad"/><rect x="9" y="3" width="1.2" height="1.2" fill="#b5b2ad"/><rect x="3" y="6" width="1.2" height="1.2" fill="#b5b2ad"/><rect x="6" y="6" width="1.2" height="1.2" fill="#b5b2ad"/><rect x="9" y="6" width="1.2" height="1.2" fill="#b5b2ad"/><rect x="0" y="9" width="1.2" height="1.2" fill="#b5b2ad"/><rect x="3" y="9" width="1.2" height="1.2" fill="#b5b2ad"/><rect x="6" y="9" width="1.2" height="1.2" fill="#b5b2ad"/><rect x="9" y="9" width="1.2" height="1.2" fill="#b5b2ad"/></svg>



<!-- header chevrons -->
<svg style="left:696px;top:158px" width="11" height="7"><path d="M1 1 L5.5 5.5 L10 1" fill="none" stroke="#111" stroke-width="2"/></svg>
<svg style="left:1041px;top:158px" width="11" height="7"><path d="M1 1 L5.5 5.5 L10 1" fill="none" stroke="#111" stroke-width="2"/></svg>
<svg style="left:1398px;top:158px" width="11" height="7"><path d="M1 1 L5.5 5.5 L10 1" fill="none" stroke="#111" stroke-width="2"/></svg>
<!-- scrollbar arrows -->
<svg style="left:1066px;top:154px" width="8" height="5"><path d="M.5 4.5 L3.8 1 L7.2 4.5" fill="none" stroke="#b8b5b0" stroke-width="1.2"/></svg>
<svg style="left:1423px;top:154px" width="8" height="5"><path d="M.5 4.5 L3.8 1 L7.2 4.5" fill="none" stroke="#b8b5b0" stroke-width="1.2"/></svg>
<svg style="left:346px;top:410px" width="8" height="5"><path d="M.5 .8 L3.8 4 L7.2 .8" fill="none" stroke="#111" stroke-width="1.5"/></svg>
<svg style="left:1066px;top:410px" width="8" height="5"><path d="M.5 .8 L3.8 4 L7.2 .8" fill="none" stroke="#111" stroke-width="1.5"/></svg>
<svg style="left:1423px;top:410px" width="8" height="5"><path d="M.5 .8 L3.8 4 L7.2 .8" fill="none" stroke="#111" stroke-width="1.5"/></svg>
<svg style="left:346px;top:154px" width="8" height="5"><path d="M.5 4.5 L3.8 1 L7.2 4.5" fill="none" stroke="#111" stroke-width="1.5"/></svg>
<!-- thumb grips -->
<div class="a" style="left:346px;top:247px;width:6px;height:6px;border-top:1px solid #5a7fb3;border-bottom:1px solid #5a7fb3"><div class="a" style="left:0;top:2px;width:6px;height:1px;background:#5a7fb3"></div></div>
<div class="a" style="left:1066px;top:259px;width:6px;height:6px;border-top:1px solid #5a7fb3;border-bottom:1px solid #5a7fb3"><div class="a" style="left:0;top:2px;width:6px;height:1px;background:#5a7fb3"></div></div>
<div class="a" style="left:1423px;top:182px;width:6px;height:6px;border-top:1px solid #5a7fb3;border-bottom:1px solid #5a7fb3"><div class="a" style="left:0;top:2px;width:6px;height:1px;background:#5a7fb3"></div></div>
<!-- paned handles -->
<div class="a" style="left:358px;top:247px;width:5px;height:47px;background-image:radial-gradient(circle,#b3b0ab .7px,transparent .9px);background-size:3px 3px"></div>
<div class="a" style="left:718px;top:247px;width:5px;height:47px;background-image:radial-gradient(circle,#b3b0ab .7px,transparent .9px);background-size:3px 3px"></div>
<div class="a" style="left:1078px;top:262px;width:5px;height:47px;background-image:radial-gradient(circle,#b3b0ab .7px,transparent .9px);background-size:3px 3px"></div>
<div class="a" style="left:697px;top:424px;width:47px;height:5px;background-image:radial-gradient(circle,#b3b0ab .7px,transparent .9px);background-size:3px 3px"></div>
<div class="a" style="left:697px;top:695px;width:47px;height:5px;background-image:radial-gradient(circle,#b3b0ab .7px,transparent .9px);background-size:3px 3px"></div>
<!-- workspace close -->
<svg style="left:277px;top:718px" width="12" height="11"><path d="M1.5 1.5 L10 9.5 M10 1.5 L1.5 9.5" stroke="#8a8a86" stroke-width="3"/><path d="M1.5 1.5 L10 9.5 M10 1.5 L1.5 9.5" stroke="#d6d5d2" stroke-width="1"/></svg>
<!-- mouse cursor -->
<svg style="left:345px;top:154px" width="14" height="21"><path d="M1 1 L1 17 L4.8 13.4 L7.6 19.6 L10.2 18.5 L7.6 12.4 L12.6 12.4Z" fill="#fff" stroke="#000" stroke-width="1.3" stroke-linejoin="miter"/></svg>

</body></html>
